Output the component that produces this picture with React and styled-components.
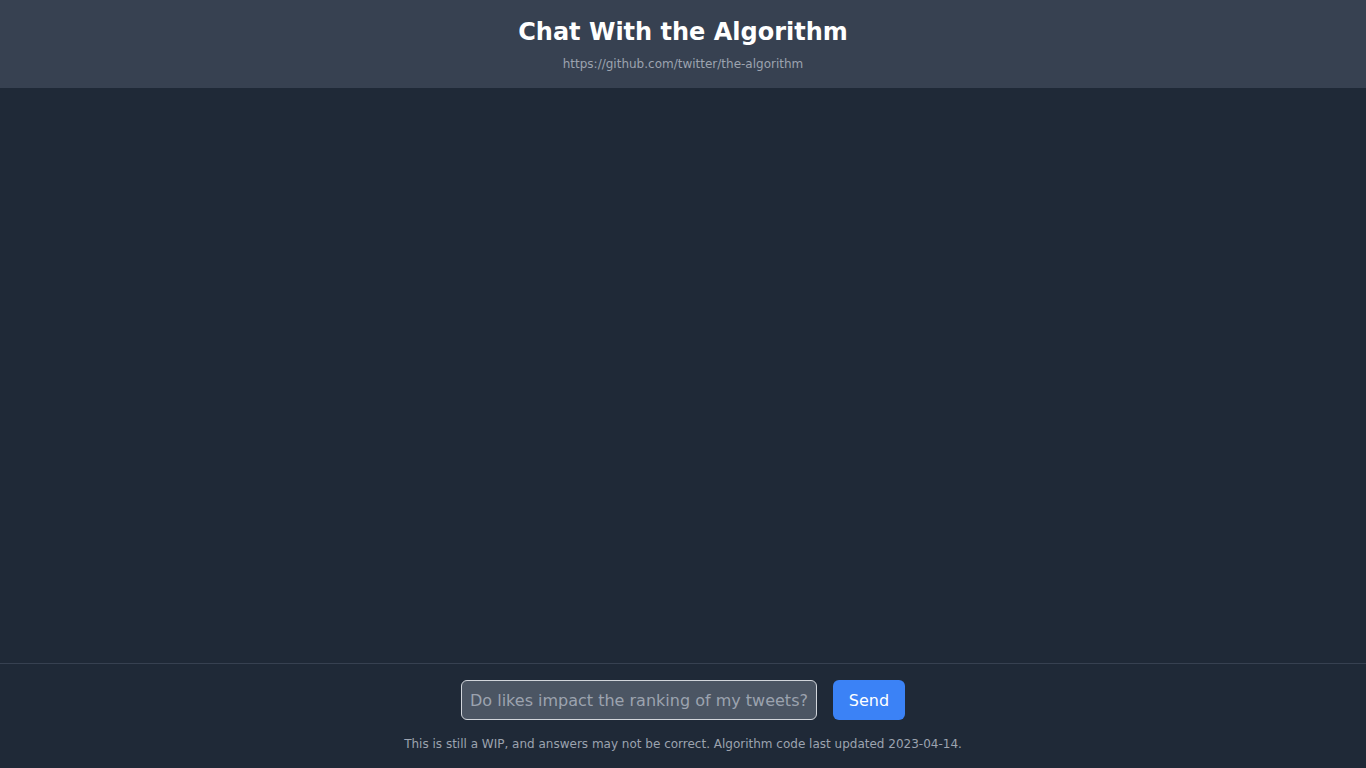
import React from "react";
import styled, { createGlobalStyle } from "styled-components";

const Global = createGlobalStyle`
  html, body { margin: 0; padding: 0; height: 100%; }
  body {
    font-family: "DejaVu Sans", sans-serif;
    background: #1f2937;
  }
  #root { height: 100%; }
  * { box-sizing: border-box; }
`;

const Page = styled.div`
  display: flex;
  flex-direction: column;
  height: 100vh;
  background: #1f2937;
  color: #fff;
`;

const Header = styled.header`
  background: #374151;
  padding: 16px;
  text-align: center;
`;

const Title = styled.h1`
  margin: 0 0 8px;
  font-size: 24px;
  line-height: 32px;
  font-weight: 700;
  color: #fff;
`;

const Link = styled.a`
  display: block;
  font-size: 12px;
  line-height: 16px;
  color: #9ca3af;
  text-decoration: none;
`;

const Messages = styled.main`
  flex: 1;
`;

const Footer = styled.footer`
  border-top: 1px solid #374151;
  padding: 16px;
`;

const Form = styled.form`
  display: flex;
  justify-content: center;
  gap: 16px;
`;

const Input = styled.input`
  width: 356px;
  height: 40px;
  padding: 0 8px;
  font-family: "DejaVu Sans", sans-serif;
  font-size: 16px;
  color: #fff;
  background: #4b5563;
  border: 1px solid #d1d5db;
  border-radius: 6px;
  outline: none;
  &::placeholder { color: #9ca3af; }
`;

const SendButton = styled.button`
  width: 72px;
  height: 40px;
  border: none;
  border-radius: 6px;
  background: #3b82f6;
  color: #fff;
  font-family: "DejaVu Sans", sans-serif;
  font-size: 16px;
  cursor: pointer;
`;

const Note = styled.p`
  margin: 16px 0 0;
  text-align: center;
  font-size: 12px;
  line-height: 16px;
  color: #9ca3af;
`;

export default function App() {
  return (
    <Page>
      <Global />
      <Header>
        <Title>Chat With the Algorithm</Title>
        <Link href="#">https://github.com/twitter/the-algorithm</Link>
      </Header>
      <Messages />
      <Footer>
        <Form onSubmit={(e) => e.preventDefault()}>
          <Input placeholder="Do likes impact the ranking of my tweets?" />
          <SendButton type="submit">Send</SendButton>
        </Form>
        <Note>
          This is still a WIP, and answers may not be correct. Algorithm code last updated 2023-04-14.
        </Note>
      </Footer>
    </Page>
  );
}
